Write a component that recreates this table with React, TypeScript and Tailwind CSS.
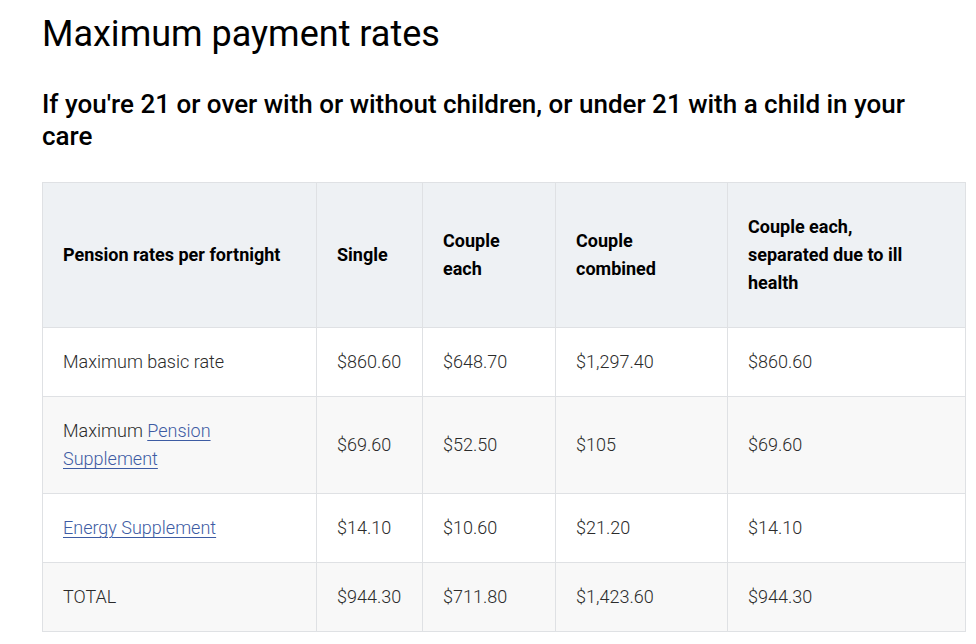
import React from 'react';

type Row = {
  label: React.ReactNode;
  values: string[];
  shaded?: boolean;
};

const Link: React.FC<{ children: React.ReactNode }> = ({ children }) => (
  <a href="#" className="text-[#3d5ba3] underline decoration-1 underline-offset-[3px]">
    {children}
  </a>
);

const rows: Row[] = [
  { label: 'Maximum basic rate', values: ['$860.60', '$648.70', '$1,297.40', '$860.60'] },
  {
    label: (
      <>
        Maximum <Link>Pension Supplement</Link>
      </>
    ),
    values: ['$69.60', '$52.50', '$105', '$69.60'],
    shaded: true,
  },
  { label: <Link>Energy Supplement</Link>, values: ['$14.10', '$10.60', '$21.20', '$14.10'] },
  { label: 'TOTAL', values: ['$944.30', '$711.80', '$1,423.60', '$944.30'], shaded: true },
];

const headers = ['Single', 'Couple each', 'Couple combined'];

const App: React.FC = () => {
  return (
    <div className="min-h-screen bg-white px-[42px] pt-[13px] text-[#1a1a1a] font-['Roboto',sans-serif]">
      <h1 className="text-[36px] leading-[1.2] font-normal text-black">Maximum payment rates</h1>
      <h2 className="mt-[32px] text-[26px] leading-[32px] font-medium text-black">
        If you're 21 or over with or without children, or under 21 with a child in your care
      </h2>

      <table className="mt-[30px] w-[923px] table-fixed border-collapse text-[18px] leading-[28px]">
        <colgroup>
          <col className="w-[274px]" />
          <col className="w-[106px]" />
          <col className="w-[133px]" />
          <col className="w-[172px]" />
          <col className="w-[238px]" />
        </colgroup>
        <thead>
          <tr className="bg-[#eef1f4]">
            <th className="border border-[#dfe1e4] px-5 py-[30px] text-left font-bold text-black">
              Pension rates per fortnight
            </th>
            {headers.map((h) => (
              <th key={h} className="border border-[#dfe1e4] px-5 py-[30px] text-left font-bold text-black">
                {h}
              </th>
            ))}
            <th className="border border-[#dfe1e4] px-5 py-[30px] text-left font-bold text-black">
              <div className="w-[170px]">Couple each, separated due to ill health</div>
            </th>
          </tr>
        </thead>
        <tbody>
          {rows.map((r, i) => (
            <tr key={i} className={r.shaded ? 'bg-[#f8f8f8]' : 'bg-white'}>
              <td className="border border-[#dfe1e4] px-5 py-5 font-light text-[#2b2b2b]">{r.label}</td>
              {r.values.map((v, j) => (
                <td key={j} className="border border-[#dfe1e4] px-5 py-5 font-light text-[#2b2b2b]">
                  {v}
                </td>
              ))}
            </tr>
          ))}
        </tbody>
      </table>
    </div>
  );
};

export default App;
